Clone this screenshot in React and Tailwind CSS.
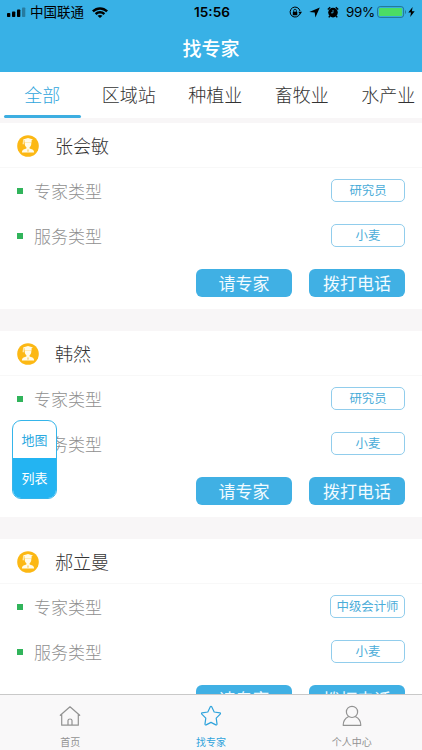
const experts = [
  { name: '张会敏', type: '研究员', service: '小麦' },
  { name: '韩然', type: '研究员', service: '小麦' },
  { name: '郝立曼', type: '中级会计师', service: '小麦' },
];

const tabs = ['全部', '区域站', '种植业', '畜牧业', '水产业'];

function StatusBar() {
  return (
    <div className="flex h-6 items-center text-black">
      <svg className="ml-[7px] h-[10px] w-[19px] shrink-0" viewBox="0 0 19 10">
        <rect x="0" y="6" width="3.3" height="4" rx="0.8" />
        <rect x="5" y="4.5" width="3.3" height="5.5" rx="0.8" />
        <rect x="10" y="2.5" width="3.3" height="7.5" rx="0.8" />
        <rect x="15" y="0.5" width="3.3" height="9.5" rx="0.8" opacity="0.3" />
      </svg>
      <span className="ml-1 w-[54px] whitespace-nowrap text-[13.5px] font-normal leading-[22px] -mt-0.5">中国联通</span>
      <svg className="ml-[7px] h-[12px] w-[18px] shrink-0" viewBox="0 0 18 12">
        <path d="M1 4.5C5.5 0 12.5 0 17 4.5L15.2 6.3C11.7 2.8 6.3 2.8 2.8 6.3ZM3.8 7.2C6.8 4.4 11.2 4.4 14.2 7.2L12.5 8.9C10.5 7.1 7.5 7.1 5.5 8.9ZM6.5 9.8C8 8.6 10 8.6 11.5 9.8L9 12Z" />
      </svg>
      <span className="ml-[85px] w-[38px] font-['Inter','Liberation_Sans',sans-serif] text-[13.6px] font-semibold leading-6">15:56</span>
      <svg className="ml-[57px] h-[13px] w-[13px] shrink-0" viewBox="0 0 13 13">
        <path d="M10.8 7.8A5 5 0 1 1 11 5" fill="none" stroke="black" strokeWidth="1" />
        <path d="M9.3 5.8h3.7l-1.8 2.6z" />
        <rect x="3.8" y="5.7" width="4.5" height="3.5" rx="0.4" />
        <path d="M4.7 6V4.6a1.35 1.35 0 0 1 2.7 0V6" fill="none" stroke="black" strokeWidth="0.8" />
      </svg>
      <svg className="ml-[7px] h-[11px] w-[11px] shrink-0" viewBox="0 0 11 11">
        <path d="M10.8 0.4L6.4 10.6L5.7 5.6L0.3 5Z" />
      </svg>
      <svg className="ml-[7px] h-[12px] w-[12px] shrink-0" viewBox="0 0 12 12">
        <circle cx="6" cy="6.6" r="4.8" />
        <path d="M0.8 3.4L3.2 1.2M11.2 3.4L8.8 1.2M2.8 10L1.8 11.4M9.2 10L10.2 11.4" stroke="black" strokeWidth="1.4" />
        <path d="M6 4V6.8H4" fill="none" stroke="#38b1e6" strokeWidth="0.8" />
      </svg>
      <span className="ml-[7px] w-[28px] whitespace-nowrap font-['Inter','Liberation_Sans',sans-serif] text-[13.4px] font-normal leading-6 tracking-[-0.3px]">99%</span>
      <svg className="ml-[3px] h-[12px] w-[30px] shrink-0" viewBox="0 0 30 12">
        <rect x="0.6" y="0.6" width="26" height="10.8" rx="2.5" fill="none" stroke="#237693" strokeWidth="1" />
        <rect x="2" y="2" width="23.2" height="8" rx="1" fill="#4bdc65" />
        <path d="M28 4C29.3 4.6 29.3 7.4 28 8Z" fill="#237693" />
      </svg>
      <svg className="ml-[1px] h-[10px] w-[7px] shrink-0" viewBox="0 0 7 10">
        <path d="M4.6 0L0.3 5.6H3L2.2 10L6.7 4.2H3.9Z" />
      </svg>
    </div>
  );
}

function ExpertIcon() {
  return (
    <svg className="mt-px h-[22px] w-[22px] shrink-0" viewBox="0 0 22 22">
      <circle cx="11" cy="11" r="10.8" fill="#fcb814" />
      <g fill="#fffbea">
        <path d="M6 4.6L11 3.1L16 4.6L14.6 5.2V7.6H7.4V5.2Z" />
        <path d="M7.7 7.4H14.3C14.5 9.8 13.7 11.4 12.6 12.2V13.4L15.4 14.4C16.6 14.9 17 15.9 17.1 17.6H4.9C5 15.9 5.4 14.9 6.6 14.4L9.4 13.4V12.2C8.3 11.4 7.5 9.8 7.7 7.4Z" />
        <path d="M6 4.8H6.7V9.3H5.7Z" />
      </g>
      <path d="M10.4 14.4H11.6L11.3 15.1L11.6 16.6H10.4L10.7 15.1Z" fill="#fcb814" />
    </svg>
  );
}

function Detail({ label, value }) {
  return (
    <div className="flex h-[45px] items-center">
      <span className="h-[6px] w-[6px] bg-[#31b45b]" />
      <span className="ml-[11px] text-[17px] leading-6 text-[#8f8f8f]">{label}</span>
      <span className="ml-auto flex h-[23px] min-w-[74px] items-center justify-center whitespace-nowrap rounded-[5px] border border-[#91cdec] px-[5.5px] text-[12.4px] font-normal text-[#4badd9]">{value}</span>
    </div>
  );
}

function ExpertCard({ name, type, service }) {
  return (
    <section className="mb-[22px] h-[186px] shrink-0 bg-white">
      <div className="flex h-[45px] items-center border-b border-[#f8f8f8] pl-[17px]">
        <ExpertIcon />
        <h2 className="ml-[16px] text-[18px] leading-6 text-[#333]">{name}</h2>
      </div>
      <div className="pl-[17px] pr-[17px]">
        <Detail label="专家类型" value={type} />
        <Detail label="服务类型" value={service} />
        <div className="mt-[11px] flex justify-end gap-[17px]">
          <button className="h-[28px] w-24 rounded-[6px] bg-[#40b0e4] text-[17px] font-normal leading-7 text-[#f2fbff]">请专家</button>
          <button className="h-[28px] w-24 rounded-[6px] bg-[#40b0e4] text-[17px] font-normal leading-7 text-[#f2fbff]">拨打电话</button>
        </div>
      </div>
    </section>
  );
}

function NavItem({ label, active, children }) {
  return (
    <div className={active ? 'flex flex-1 flex-col items-center text-[#2fa3dc]' : 'flex flex-1 flex-col items-center text-[#929292]'}>
      <svg className="mt-[10px] h-[22px] w-[22px]" viewBox="0 0 22 22" fill="none" stroke="currentColor" strokeWidth="1.2" strokeLinejoin="round" strokeLinecap="round">
        {children}
      </svg>
      <span className="mt-[7px] text-[10px] font-normal leading-4">{label}</span>
    </div>
  );
}

export default function App() {
  return (
    <div className="relative flex h-[750px] w-[422px] flex-col overflow-hidden bg-[#f8f6f7] font-['Noto_Sans_CJK_SC',sans-serif] font-light">
      <header className="h-[72px] shrink-0 bg-[#38b1e6]">
        <StatusBar />
        <h1 className="text-center text-[19px] font-medium leading-[47px] text-white">找专家</h1>
      </header>
      <nav className="-ml-px flex h-[46px] w-[433px] shrink-0 bg-white">
        {tabs.map((tab, i) => (
          <div key={tab} className="flex w-[86.5px] shrink-0 flex-col items-center">
            <span className={i === 0 ? 'h-[43px] text-[18px] leading-[45px] text-[#30a5dc]' : 'h-[43px] text-[18px] leading-[45px] text-[#333]'}>{tab}</span>
            {i === 0 && <span className="h-[3px] w-[77px] rounded-full bg-[#3daee1]" />}
          </div>
        ))}
      </nav>
      <main className="flex min-h-0 flex-1 flex-col overflow-hidden pt-[5px]">
        {experts.map((expert) => (
          <ExpertCard key={expert.name} {...expert} />
        ))}
      </main>
      <footer className="flex h-[56px] shrink-0 border-t border-[#c9c9c9] bg-[#f9f8f9]">
        <NavItem label="首页">
          <path d="M1.3 10.3L11 1.8L20.7 10.3M2.7 9.3V20.2H19.3V9.3M9 20V15.5Q9 14 11 14Q13 14 13 15.5V20" />
        </NavItem>
        <NavItem label="找专家" active>
          <path d="M10.2 1.9Q11 0.9 11.8 1.9L14.2 7L19.9 7.9Q20.9 8.2 20.2 9.1L16.2 13.2L17 18.9Q17 20.3 15.8 19.9L11 17.4L6.2 19.9Q5 20.3 5 18.9L5.8 13.2L1.8 9.1Q1.1 8.2 2.1 7.9L7.8 7Z" />
        </NavItem>
        <NavItem label="个人中心">
          <circle cx="11" cy="6.9" r="5.6" />
          <path d="M7.4 11.7C4.2 13.2 2.2 16.4 2.2 20.3H19.8C19.8 16.4 17.8 13.2 14.6 11.7" />
        </NavItem>
      </footer>
      <div className="absolute left-[12px] top-[420px] flex h-[79px] w-[45px] flex-col overflow-hidden rounded-[9px] border border-[#35b5ea] bg-white text-center text-[13px] font-normal">
        <button className="h-[37px] shrink-0 leading-[37px] text-[#2ca9df]">地图</button>
        <button className="flex-1 bg-[#23b4f2] leading-[38px] text-white">列表</button>
      </div>
    </div>
  );
}
